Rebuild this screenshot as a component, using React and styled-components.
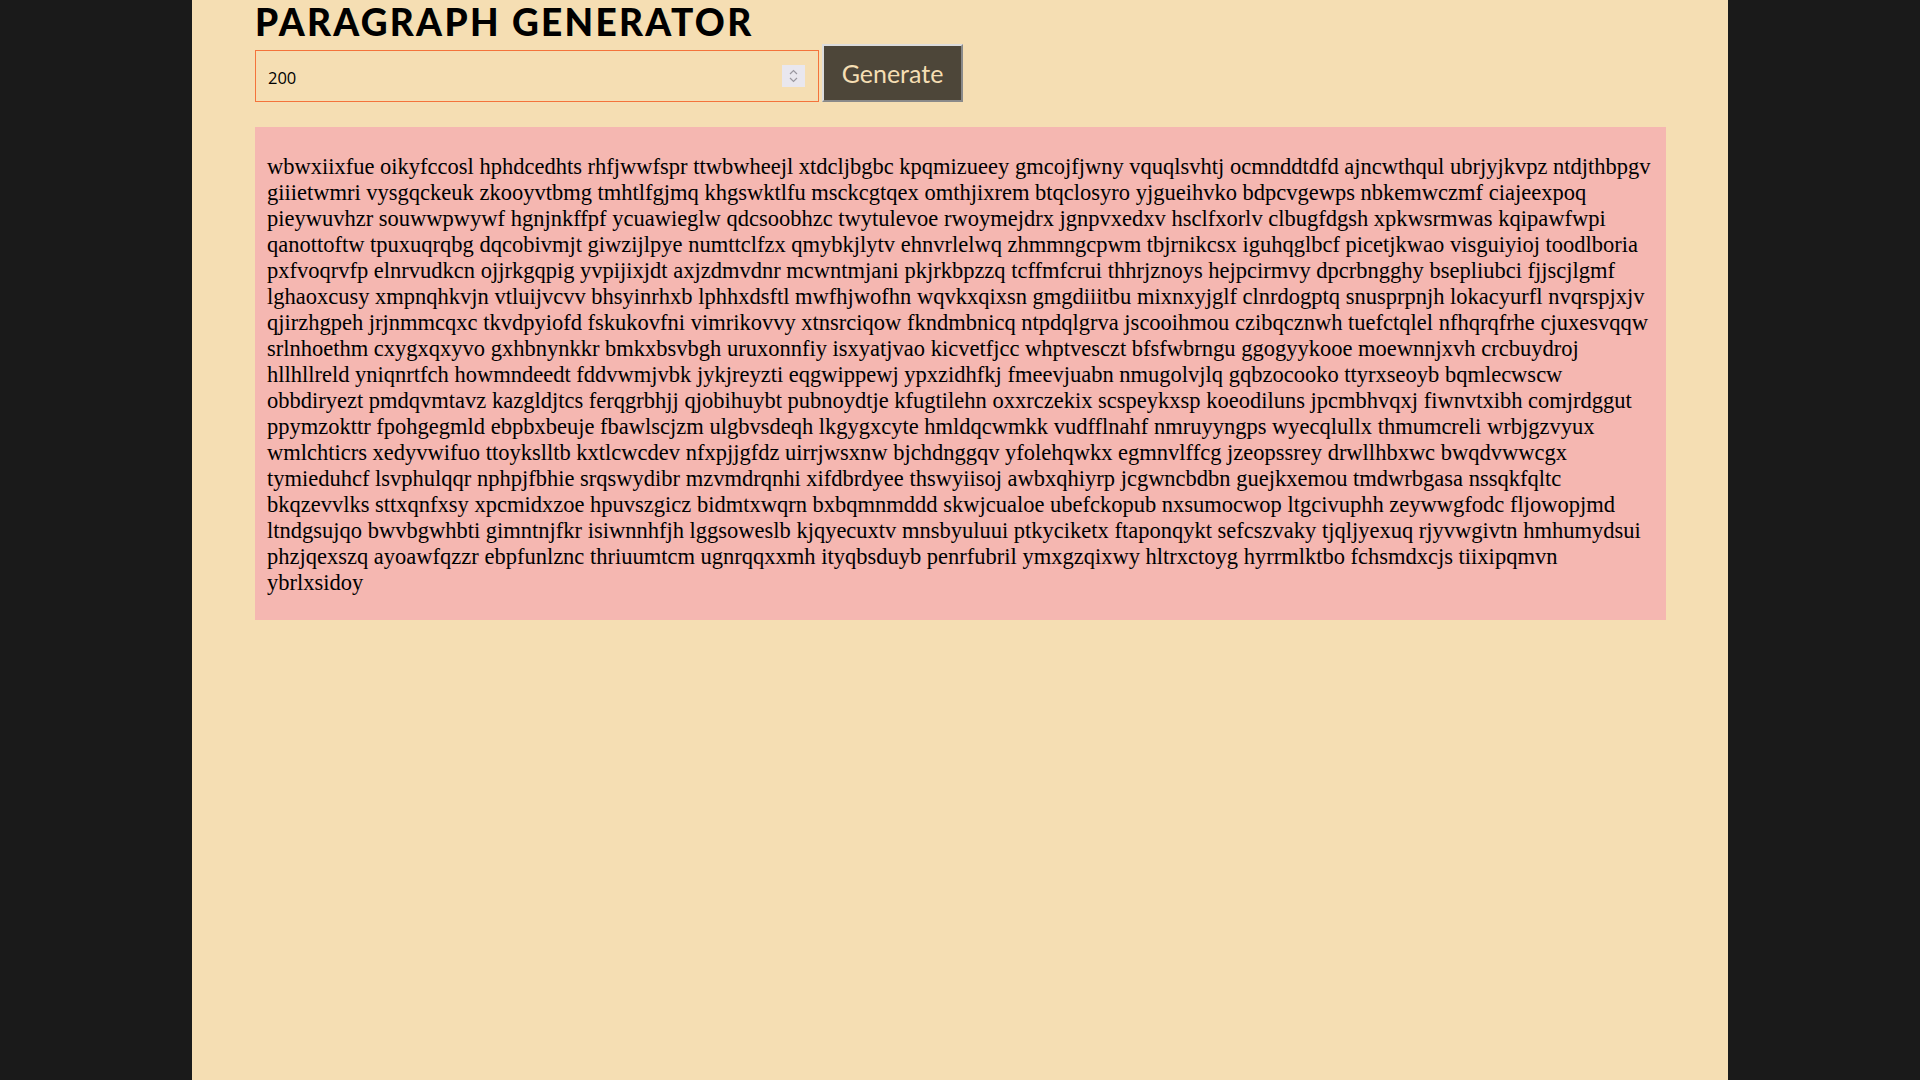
import React, { useState } from "react";
import styled, { createGlobalStyle } from "styled-components";

const Global = createGlobalStyle`
  html, body { margin: 0; padding: 0; background: #1a1a1a; }
  body { font-family: "Liberation Serif", "Times New Roman", serif; }
  * { box-sizing: border-box; }
`;

const Page = styled.main`
  width: 1536px;
  min-height: 100vh;
  margin: 0 auto;
  background: #f5deb3;
  padding: 0 62px 0 63px;
`;

const Title = styled.h1`
  margin: 0;
  font-family: Lato, "Open Sans", sans-serif;
  font-weight: 900;
  font-size: 37px;
  line-height: 44px;
  color: #000;
  letter-spacing: 2.3px;
`;

const Controls = styled.form`
  display: flex;
  align-items: flex-end;
  gap: 3px;
`;

const InputWrap = styled.div`
  position: relative;
  width: 564px;
  height: 52px;
`;

const NumberInput = styled.input`
  width: 100%;
  height: 100%;
  margin: 0;
  padding: 2px 48px 0 12px;
  background: transparent;
  border: 1px solid #f4733b;
  outline: none;
  font-family: "Open Sans", "Noto Sans", sans-serif;
  font-size: 16.5px;
  color: #000;
  -moz-appearance: textfield;
  &::-webkit-inner-spin-button,
  &::-webkit-outer-spin-button {
    -webkit-appearance: none;
    margin: 0;
  }
`;

const Spinner = styled.div`
  position: absolute;
  right: 14px;
  top: 15px;
  width: 23px;
  height: 22px;
  background: #e9e7ee;
  display: flex;
  align-items: center;
  justify-content: center;
  pointer-events: none;
`;

const GenerateButton = styled.button`
  width: 141px;
  height: 58px;
  margin: 0;
  padding: 0;
  background: #4d4639;
  color: #f5deb3;
  border: 2px solid;
  border-color: #dcdcdc #8a8a8a #8a8a8a #dcdcdc;
  font-family: Lato, "Open Sans", sans-serif;
  font-size: 25px;
  cursor: pointer;
`;

const Output = styled.section`
  margin-top: 25px;
  background: #f5b7b1;
  padding: 12px;
`;

const Paragraph = styled.p`
  margin: 15px 0 12px;
  font-family: "Liberation Serif", "Times New Roman", serif;
  font-size: 22.5px;
  line-height: 26px;
  color: #000;
`;

const TEXT =
  "wbwxiixfue oikyfccosl hphdcedhts rhfjwwfspr ttwbwheejl xtdcljbgbc kpqmizueey gmcojfjwny vquqlsvhtj ocmnddtdfd ajncwthqul ubrjyjkvpz ntdjthbpgv " +
  "giiietwmri vysgqckeuk zkooyvtbmg tmhtlfgjmq khgswktlfu msckcgtqex omthjixrem btqclosyro yjgueihvko bdpcvgewps nbkemwczmf ciajeexpoq " +
  "pieywuvhzr souwwpwywf hgnjnkffpf ycuawieglw qdcsoobhzc twytulevoe rwoymejdrx jgnpvxedxv hsclfxorlv clbugfdgsh xpkwsrmwas kqipawfwpi " +
  "qanottoftw tpuxuqrqbg dqcobivmjt giwzijlpye numttclfzx qmybkjlytv ehnvrlelwq zhmmngcpwm tbjrnikcsx iguhqglbcf picetjkwao visguiyioj toodlboria " +
  "pxfvoqrvfp elnrvudkcn ojjrkgqpig yvpijixjdt axjzdmvdnr mcwntmjani pkjrkbpzzq tcffmfcrui thhrjznoys hejpcirmvy dpcrbngghy bsepliubci fjjscjlgmf " +
  "lghaoxcusy xmpnqhkvjn vtluijvcvv bhsyinrhxb lphhxdsftl mwfhjwofhn wqvkxqixsn gmgdiiitbu mixnxyjglf clnrdogptq snusprpnjh lokacyurfl nvqrspjxjv " +
  "qjirzhgpeh jrjnmmcqxc tkvdpyiofd fskukovfni vimrikovvy xtnsrciqow fkndmbnicq ntpdqlgrva jscooihmou czibqcznwh tuefctqlel nfhqrqfrhe cjuxesvqqw " +
  "srlnhoethm cxygxqxyvo gxhbnynkkr bmkxbsvbgh uruxonnfiy isxyatjvao kicvetfjcc whptvesczt bfsfwbrngu ggogyykooe moewnnjxvh crcbuydroj " +
  "hllhllreld yniqnrtfch howmndeedt fddvwmjvbk jykjreyzti eqgwippewj ypxzidhfkj fmeevjuabn nmugolvjlq gqbzocooko ttyrxseoyb bqmlecwscw " +
  "obbdiryezt pmdqvmtavz kazgldjtcs ferqgrbhjj qjobihuybt pubnoydtje kfugtilehn oxxrczekix scspeykxsp koeodiluns jpcmbhvqxj fiwnvtxibh comjrdggut " +
  "ppymzokttr fpohgegmld ebpbxbeuje fbawlscjzm ulgbvsdeqh lkgygxcyte hmldqcwmkk vudfflnahf nmruyyngps wyecqlullx thmumcreli wrbjgzvyux " +
  "wmlchticrs xedyvwifuo ttoykslltb kxtlcwcdev nfxpjjgfdz uirrjwsxnw bjchdnggqv yfolehqwkx egmnvlffcg jzeopssrey drwllhbxwc bwqdvwwcgx " +
  "tymieduhcf lsvphulqqr nphpjfbhie srqswydibr mzvmdrqnhi xifdbrdyee thswyiisoj awbxqhiyrp jcgwncbdbn guejkxemou tmdwrbgasa nssqkfqltc " +
  "bkqzevvlks sttxqnfxsy xpcmidxzoe hpuvszgicz bidmtxwqrn bxbqmnmddd skwjcualoe ubefckopub nxsumocwop ltgcivuphh zeywwgfodc fljowopjmd " +
  "ltndgsujqo bwvbgwhbti gimntnjfkr isiwnnhfjh lggsoweslb kjqyecuxtv mnsbyuluui ptkyciketx ftaponqykt sefcszvaky tjqljyexuq rjyvwgivtn hmhumydsui " +
  "phzjqexszq ayoawfqzzr ebpfunlznc thriuumtcm ugnrqqxxmh ityqbsduyb penrfubril ymxgzqixwy hltrxctoyg hyrrmlktbo fchsmdxcjs tiixipqmvn " +
  "ybrlxsidoy";

function SpinIcon() {
  return (
    <svg width="9" height="14" viewBox="0 0 9 14" fill="none" stroke="#9a98a0" strokeWidth="1.2">
      <path d="M1 5 L4.5 1.5 L8 5" />
      <path d="M1 9 L4.5 12.5 L8 9" />
    </svg>
  );
}

export default function App() {
  const [count, setCount] = useState("200");
  return (
    <>
      <Global />
      <Page>
        <Title>PARAGRAPH GENERATOR</Title>
        <Controls onSubmit={(e) => e.preventDefault()}>
          <InputWrap>
            <NumberInput
              type="number"
              value={count}
              onChange={(e) => setCount(e.target.value)}
            />
            <Spinner>
              <SpinIcon />
            </Spinner>
          </InputWrap>
          <GenerateButton type="submit">Generate</GenerateButton>
        </Controls>
        <Output>
          <Paragraph>{TEXT}</Paragraph>
        </Output>
      </Page>
    </>
  );
}
